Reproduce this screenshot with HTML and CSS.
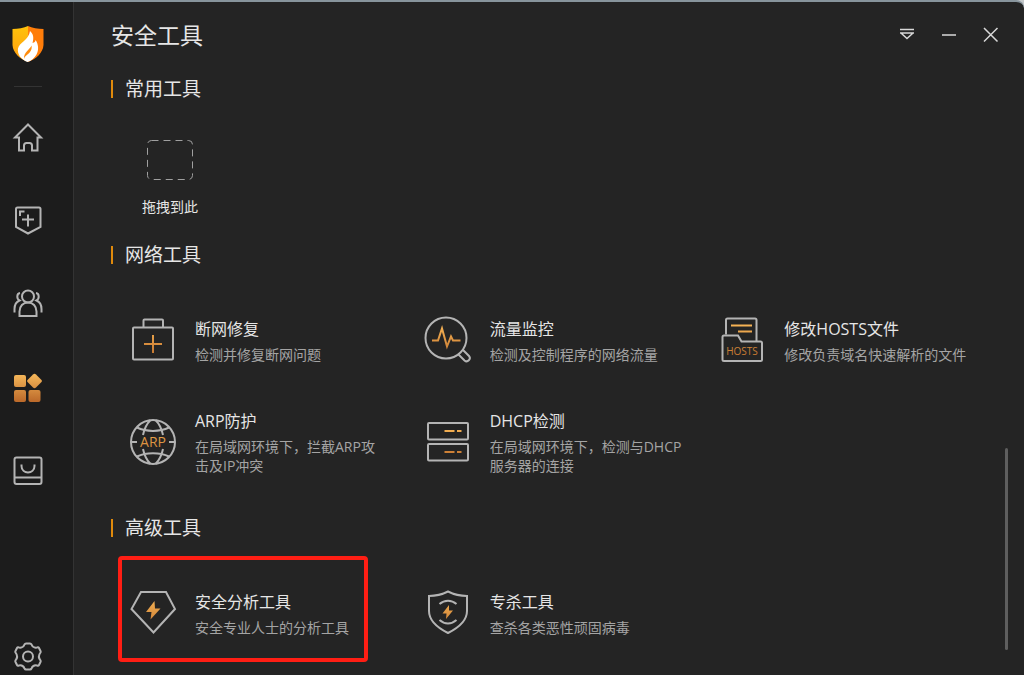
FILE: index.html
```html
<!DOCTYPE html>
<html lang="zh-CN">
<head>
  <meta charset="utf-8">
  <title>安全工具</title>

  <link rel="stylesheet" href="styles.css">

</head>

<body>

<!-- shared gradients -->
<svg class="defs" aria-hidden="true">
  <defs>
    <linearGradient id="amber" gradientUnits="userSpaceOnUse" x1="0" y1="10" x2="0" y2="42">
      <stop offset="0" stop-color="#f5b254"/>
      <stop offset="1" stop-color="#c0702c"/>
    </linearGradient>
    <linearGradient id="amberNav" gradientUnits="userSpaceOnUse" x1="0" y1="2" x2="0" y2="30">
      <stop offset="0" stop-color="#f8bb5c"/>
      <stop offset="1" stop-color="#bd6b2b"/>
    </linearGradient>
    <linearGradient id="logoLeft" x1="0" y1="0" x2="0" y2="1">
      <stop offset="0" stop-color="#ffc30a"/>
      <stop offset="1" stop-color="#ff9c10"/>
    </linearGradient>
  </defs>
</svg>

<div class="window">

  <aside class="sidebar">
    <svg class="logo" viewBox="0 0 32 38" role="img" aria-label="logo">
      <path fill="url(#logoLeft)" d="M16 1C12 3 6 4 0.500 4V20C1 28 8 34 16 37Z"/>
      <path fill="#ff7d0a" d="M16 1C20 3 26 4 31.500 4V20C31 28 24 34 16 37Z"/>
      <path fill="#fff" d="M18 6C21.500 9 22 13 20.500 18C22.500 17.500 23.500 16.500 23.500 15C26.500 19 27 25 24.500 29.500C22.500 33 19 36 15.500 37C9 34.500 5 29 6 23.500C7 17.500 17 15 18 6Z"/>
      <path fill="#ff8c0c" d="M19.500 20.500C18 24.500 11.500 27 12 34C13 30.500 16 29.500 18 27C19.500 25 20 23 19.500 20.500Z"/>
    </svg>

    <nav class="nav">
      <button type="button" aria-label="首页">
        <svg viewBox="0 0 32 32"><path d="M16 2.500L29 15.500H25.500V28.500H20V23.500Q20 21 17.500 21H14.500Q12 21 12 23.500V28.500H7V15.500H3Z"/></svg>
      </button>
      <button type="button" aria-label="病毒查杀">
        <svg viewBox="0 0 32 32"><path d="M5.500 2.500H27Q28.500 2.500 28.500 4V22L16 28.500L4 22V4Q4 2.500 5.500 2.500Z"/><path d="M16 9.500V21.500M10 14.500H22M8 11V6.500H12.500"/></svg>
      </button>
      <button type="button" aria-label="家长控制">
        <svg viewBox="0 0 32 32"><circle cx="16" cy="8.500" r="6"/><path d="M7.500 28V23.500C7.500 18 11 14.500 16 14.500S24.500 18 24.500 23.500V28Z"/><path d="M8 5C4.500 5.500 4.500 11 7.500 12.500C4 14 2.500 17 2.500 21V24.500M24 5C27.500 5.500 27.500 11 24.500 12.500C28 14 29.500 17 29.500 21V24.500"/></svg>
      </button>
      <button type="button" aria-label="安全工具" class="active">
        <svg viewBox="0 0 32 32"><rect x="2" y="4" width="12" height="12" rx="2"/><rect x="2" y="19" width="12" height="12" rx="2"/><rect x="16.500" y="19" width="12" height="12" rx="2"/><path d="M21 3.500Q22.500 2 24 3.500L29.500 9Q30.500 10 29.500 11L24 16.500Q22.500 18 21 16.500L15.500 11Q14.500 10 15.500 9Z"/></svg>
      </button>
      <button type="button" aria-label="软件商店">
        <svg viewBox="0 0 32 32"><rect x="2.500" y="3.500" width="27" height="26.500" rx="2"/><path d="M2.500 23.500H29.500M9.500 10.500V12C9.500 20.500 22.500 20.500 22.500 12V10.500"/></svg>
      </button>
      <button type="button" aria-label="设置" class="settings">
        <svg viewBox="0 0 32 32"><circle cx="16" cy="15.500" r="5"/><path d="M12.500 3.500Q13 2.500 14 2.500H18Q19 2.500 19.500 3.500C20.500 6 22.500 7 25 6.500Q26.500 6 27 7L28.500 10Q29 11 28.500 11.500C26.500 14 26.500 17 28.500 19.500Q29 20 28.500 21L27 24Q26.500 25 25 24.500C22.500 24 20.500 25 19.500 27.500Q19 28.500 18 28.500H14Q13 28.500 12.500 27.500C11.500 25 9.500 24 7 24.500Q5.500 25 5 24L3.500 21Q3 20 3.500 19.500C5.500 17 5.500 14 3.500 11.500Q3 11 3.500 10L5 7Q5.500 6 7 6.500C9.500 7 11.500 6 12.500 3.500Z"/></svg>
      </button>
    </nav>
  </aside>

  <main class="main">

    <header class="titlebar">
      <h1>安全工具</h1>
      <div class="controls">
        <button type="button" aria-label="菜单"><svg viewBox="0 0 16 16"><path d="M1 2.500H15M1 6H15M2.500 6.500L8 11.500L13.500 6.500"/></svg></button>
        <button type="button" aria-label="最小化"><svg viewBox="0 0 16 16"><path d="M1 8H15"/></svg></button>
        <button type="button" aria-label="关闭"><svg viewBox="0 0 16 16"><path d="M1 1L14.500 14.500M14.500 1L1 14.500"/></svg></button>
      </div>
    </header>

    <section>
      <h2>常用工具</h2>
      <div class="dropzone">
        <svg viewBox="0 0 48 42"><rect x="1.500" y="1.500" width="45" height="39" rx="4"/></svg>
        <span>拖拽到此</span>
      </div>
    </section>

    <section>
      <h2>网络工具</h2>
      <div class="tools">

        <a class="tool" href="#">
          <svg viewBox="0 0 48 48"><rect x="4" y="11.500" width="40" height="32" rx="1"/><path d="M14.500 11V4.500Q14.500 3.500 15.500 3.500H33Q34 3.500 34 4.500V11"/><path class="hot" d="M15 28H33M24 19V37"/></svg>
          <div>
            <h3>断网修复</h3>
            <p>检测并修复断网问题</p>
          </div>
        </a>

        <a class="tool" href="#">
          <svg viewBox="0 0 48 48"><circle cx="22" cy="22" r="20.500"/><path d="M34.500 38.500L40.500 44.500C43.500 47 47.500 43 45 40L39 34"/><path class="hot" d="M8 24.500H14L18 12.500L23 30.500L27 20.500L29 24.500H36.500"/></svg>
          <div>
            <h3>流量监控</h3>
            <p>检测及控制程序的网络流量</p>
          </div>
        </a>

        <a class="tool" href="#">
          <svg viewBox="0 0 48 48"><path d="M8 18.500V4Q8 2.500 9.500 2.500H37Q38.500 2.500 38.500 4V25"/><path d="M6 19.500H20L23.500 25.500H42.500Q44 25.500 44 27V43.500Q44 45 42.500 45H6Q4.500 45 4.500 43.500V21Q4.500 19.500 6 19.500Z"/><path class="hot" d="M13 9.500H34M20 15.500H34"/><text x="24" y="39" font-size="10">HOSTS</text></svg>
          <div>
            <h3>修改HOSTS文件</h3>
            <p>修改负责域名快速解析的文件</p>
          </div>
        </a>

        <a class="tool" href="#">
          <svg viewBox="0 0 48 48"><circle cx="24" cy="24" r="22"/><path d="M8 9.500C17 14 31 14 40 9.500M8 38.500C17 34 31 34 40 38.500M14 17C15.500 10 18.500 5 21.500 2M34 17C32.500 10 29.500 5 26.500 2M14 31C15.500 38 18.500 43 21.500 46M34 31C32.500 38 29.500 43 26.500 46M2 24H8M40 24H46"/><text x="24" y="29" font-size="14">ARP</text></svg>
          <div>
            <h3>ARP防护</h3>
            <p>在局域网环境下，拦截ARP攻<br>击及IP冲突</p>
          </div>
        </a>

        <a class="tool" href="#">
          <svg viewBox="0 0 48 48"><rect x="4" y="5" width="40" height="16.500" rx="1"/><rect x="4" y="26" width="40" height="16.500" rx="1"/><path class="hot" d="M20.500 13H30.500M33 13H37.500M20.500 34H30.500M33 34H37.500"/></svg>
          <div>
            <h3>DHCP检测</h3>
            <p>在局域网环境下，检测与DHCP<br>服务器的连接</p>
          </div>
        </a>

      </div>
    </section>

    <section>
      <h2>高级工具</h2>
      <div class="tools">

        <a class="tool marked" href="#">
          <svg viewBox="0 0 48 48"><path d="M12 3H37L46 20L24.500 43.500L2.500 20Z"/><path class="bolt" d="M25.500 12L17 23H22.500L21.500 30.500L31.500 19.500H26Z"/></svg>
          <div>
            <h3>安全分析工具</h3>
            <p>安全专业人士的分析工具</p>
          </div>
        </a>

        <a class="tool" href="#">
          <svg viewBox="0 0 48 48"><path d="M24 2.500C18 5.500 12 7 5 7V22C5 32 14 39 24 44C34 39 43 32 43 22V7C36 7 30 5.500 24 2.500Z"/><path d="M15.500 15C20.500 10.500 27.500 10.500 32.500 15M15.500 31C20.500 35.500 27.500 35.500 32.500 31"/><path class="bolt" d="M25 16L18.500 24.500H22.500L22 30L29 21.500H25Z"/></svg>
          <div>
            <h3>专杀工具</h3>
            <p>查杀各类恶性顽固病毒</p>
          </div>
        </a>

      </div>
    </section>

    <div class="scrollbar"></div>

  </main>

</div>

</body>
</html>
```

FILE: styles.css
```css
* {
  box-sizing: border-box;
}
body {
  margin: 0;
  font-family: "Open Sans", "Noto Sans CJK SC", sans-serif;
  font-size: 14px;
  background-color: #c4c8ca;
  color: #e6e6e6;
}
h1, h2, h3, p {
  margin: 0;
  font-weight: normal;
}
button {
  padding: 0;
  border: 0;
  background: none;
}
svg {
  display: block;
  flex: none;
  fill: none;
  stroke: #b4b4b4;
  stroke-width: 2;
}
.defs {
  position: absolute;
  width: 0;
  height: 0;
}
.window {
  display: flex;
  min-height: 100vh;
  border-top: 2px solid #87949c;
  border-top-right-radius: 8px;
  background-color: #242424;
  overflow: hidden;
}

/* left bar */
.sidebar {
  display: flex;
  flex-direction: column;
  flex: none;
  width: 74px;
  padding: 23px 12px 2px;
  border-right: 1px solid #333;
  background-color: #1c1c1c;
}
.logo {
  width: 32px;
  height: 38px;
  stroke: none;
}
.nav {
  display: flex;
  flex-direction: column;
  flex: 1;
  gap: 51px;
  margin-top: 23px;
}
.nav::before {
  content: "";
  width: 28px;
  height: 1px;
  margin: 0 2px -16px;
  background-color: #333;
}
.nav button,
.nav svg {
  width: 32px;
  height: 32px;
}
.nav .active svg {
  fill: url(#amberNav);
  stroke: none;
}
.nav .settings {
  margin-top: auto;
}

/* right side */
.main {
  position: relative;
  flex: 1;
  padding-left: 37px;
}
.titlebar {
  display: flex;
  align-items: center;
  justify-content: space-between;
  height: 66px;
  margin-bottom: 7px;
  padding-right: 12px;
}
h1 {
  font-size: 23px;
  line-height: 32px;
}
.controls {
  display: flex;
}
.controls button {
  display: flex;
  justify-content: center;
  width: 42px;
}
.controls svg {
  width: 16px;
  height: 16px;
  stroke: #d8d8d8;
  stroke-width: 1.5;
}
section {
  margin-bottom: 39px;
}
section:last-of-type {
  margin-bottom: 0;
}
h2 {
  display: flex;
  align-items: center;
  gap: 12px;
  font-size: 19px;
  line-height: 28px;
}
h2::before {
  content: "";
  width: 2px;
  height: 18px;
  background-color: #e08a0c;
}
.dropzone {
  display: inline-flex;
  flex-direction: column;
  align-items: center;
  gap: 16px;
  margin: 36px 0 -15px 31px;
  line-height: 20px;
}
.dropzone svg {
  width: 48px;
  height: 42px;
  stroke: #a0a0a0;
  stroke-width: 1;
  stroke-dasharray: 7 5;
}
.tools {
  display: grid;
  grid-template-columns: repeat(3, 1fr);
  row-gap: 45px;
  margin: 47px 11px 0 18px;
}
.tool {
  position: relative;
  display: flex;
  align-items: center;
  gap: 18px;
  color: inherit;
  text-decoration: none;
}
.tool svg {
  width: 48px;
  height: 48px;
}
.tool .hot {
  stroke: url(#amber);
}
.tool .bolt {
  fill: url(#amber);
  stroke: none;
}
.tool text {
  fill: url(#amber);
  stroke: none;
  text-anchor: middle;
}
.tool div {
  padding-top: 2px;
  white-space: nowrap;
}
h3 {
  margin-bottom: 6px;
  font-size: 16px;
  line-height: 20px;
}
.tool p {
  color: #a4a4a4;
  line-height: 19px;
}
.marked::after {
  content: "";
  position: absolute;
  top: -33px;
  left: -11px;
  width: 242px;
  height: 98px;
  border: 4px solid #ff1e14;
  border-radius: 4px;
}
.scrollbar {
  position: absolute;
  right: 16px;
  bottom: 25px;
  width: 3px;
  height: 30%;
  border-radius: 2px;
  background-color: #5e5e5e;
}
```
